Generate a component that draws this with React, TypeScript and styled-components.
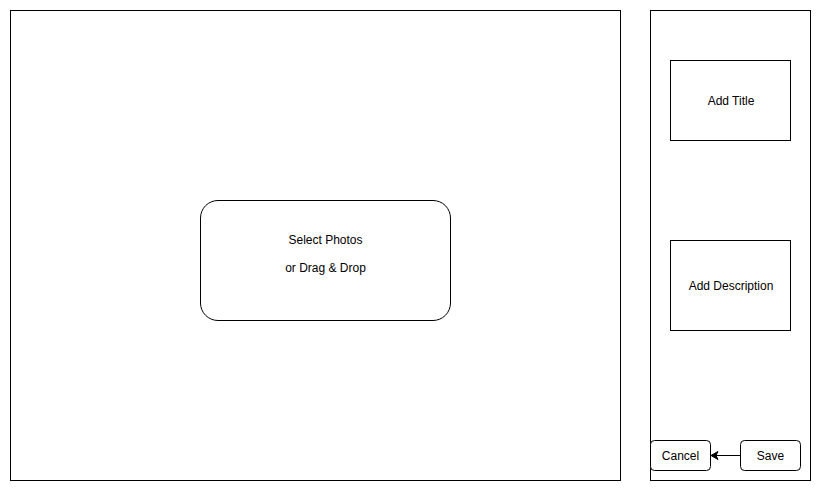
import React from "react";
import styled, { createGlobalStyle } from "styled-components";

const Global = createGlobalStyle`
  html, body { margin: 0; padding: 0; background: #ffffff; }
  body { font-family: "Liberation Sans", Arial, Helvetica, sans-serif; font-size: 12px; color: #000; }
  * { box-sizing: border-box; }
`;

const Page = styled.div`
  display: flex;
  align-items: flex-start;
  gap: 29px;
  padding: 10px;
  width: 821px;
  height: 491px;
`;

const Canvas = styled.section`
  width: 611px;
  height: 471px;
  border: 1px solid #000;
  display: flex;
  align-items: flex-start;
  padding: 189px 0 0 189px;
`;

const DropZone = styled.div`
  width: 251px;
  height: 121px;
  border: 1px solid #000;
  border-radius: 18px;
  display: flex;
  flex-direction: column;
  align-items: center;
  justify-content: center;
  gap: 14px;
  padding-bottom: 14px;
  line-height: 14px;
`;

const Side = styled.aside`
  width: 161px;
  height: 471px;
  border: 1px solid #000;
  display: flex;
  flex-direction: column;
  align-items: flex-start;
`;

const Field = styled.div<{ $top: number; $height: number }>`
  margin: ${(p) => p.$top}px 0 0 19px;
  width: 121px;
  height: ${(p) => p.$height}px;
  border: 1px solid #000;
  display: flex;
  align-items: center;
  justify-content: center;
  padding-left: 1px;
`;

const Actions = styled.div`
  margin: auto 0 9px -1px;
  display: flex;
  align-items: stretch;
  height: 31px;
`;

const Button = styled.div`
  width: 61px;
  height: 31px;
  border: 1px solid #000;
  border-radius: 4.5px;
  display: flex;
  align-items: center;
  justify-content: center;
  background: #fff;
`;

const Connector = styled.svg`
  display: block;
  width: 29px;
  height: 31px;
`;

export default function App() {
  return (
    <>
      <Global />
      <Page>
        <Canvas>
          <DropZone>
            <span>Select Photos</span>
            <span>or Drag &amp; Drop</span>
          </DropZone>
        </Canvas>
        <Side>
          <Field $top={49} $height={81}>Add Title</Field>
          <Field $top={99} $height={91}>Add Description</Field>
          <Actions>
            <Button>Cancel</Button>
            <Connector viewBox="0 0 29 31">
              <line x1="29" y1="15.5" x2="4" y2="15.5" stroke="#000" strokeWidth="1" />
              <path d="M0 15.5 L7 11.5 L5 15.5 L7 19.5 Z" fill="#000" stroke="#000" strokeWidth="1" strokeLinejoin="miter" />
            </Connector>
            <Button>Save</Button>
          </Actions>
        </Side>
      </Page>
    </>
  );
}
